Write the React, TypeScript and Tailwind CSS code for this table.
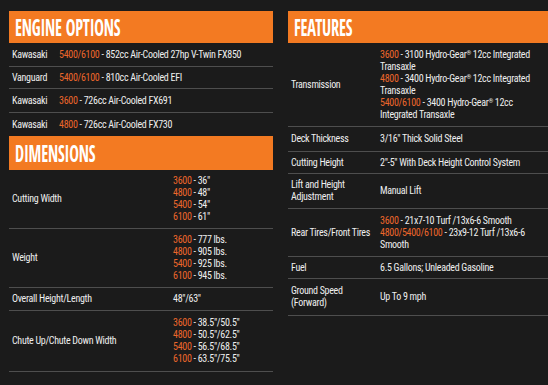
import React from "react";

const O = ({ children }: { children: React.ReactNode }) => (
  <span className="text-[#ec672b]">{children}</span>
);

const Header = ({ title, h }: { title: string; h: string }) => (
  <div className={`${h} bg-[#f37a22] flex items-center pl-[6px] overflow-hidden`}>
    <span className="inline-block origin-left scale-x-[0.68] text-white font-bold text-[24px] leading-none whitespace-nowrap font-['Open_Sans_Condensed','Roboto_Condensed',sans-serif]">
      {title}
    </span>
  </div>
);

const line = "border-b border-[#4e4e4e]";

export default function App() {
  return (
    <div className="w-[548px] h-[385px] overflow-hidden bg-[#1b1b1b] flex pt-[11px] text-[#eeeeee] text-[10px] leading-[12px] tracking-[-0.3px] font-['Roboto_Condensed','Liberation_Sans',sans-serif]">
      {/* Left column */}
      <div className="ml-[9px] w-[264px] flex flex-col shrink-0">
        <Header title="ENGINE OPTIONS" h="h-[32px]" />
        <div className="flex flex-col">
          <div className={`h-[24px] flex items-center ${line} whitespace-nowrap`}>
            <div className="w-[50px] pl-[3px]">Kawasaki</div>
            <div><O>5400/6100</O> - 852cc Air-Cooled 27hp V-Twin FX850</div>
          </div>
          <div className={`h-[22px] flex items-center ${line} whitespace-nowrap`}>
            <div className="w-[50px] pl-[3px]">Vanguard</div>
            <div><O>5400/6100</O> - 810cc Air-Cooled EFI</div>
          </div>
          <div className={`h-[24px] flex items-center ${line} whitespace-nowrap`}>
            <div className="w-[50px] pl-[3px]">Kawasaki</div>
            <div><O>3600</O> - 726cc Air-Cooled FX691</div>
          </div>
          <div className="h-[23px] flex items-center whitespace-nowrap">
            <div className="w-[50px] pl-[3px]">Kawasaki</div>
            <div><O>4800</O> - 726cc Air-Cooled FX730</div>
          </div>
        </div>
        <Header title="DIMENSIONS" h="h-[34px]" />
        <div className="flex flex-col">
          <div className={`h-[59px] flex items-center ${line} whitespace-nowrap`}>
            <div className="w-[164px] pl-[3px]">Cutting Width</div>
            <div>
              <div><O>3600</O> - 36"</div>
              <div><O>4800</O> - 48"</div>
              <div><O>5400</O> - 54"</div>
              <div><O>6100</O> - 61"</div>
            </div>
          </div>
          <div className={`h-[59px] flex items-center ${line} whitespace-nowrap`}>
            <div className="w-[164px] pl-[3px]">Weight</div>
            <div>
              <div><O>3600</O> - 777 lbs.</div>
              <div><O>4800</O> - 905 lbs.</div>
              <div><O>5400</O> - 925 lbs.</div>
              <div><O>6100</O> - 945 lbs.</div>
            </div>
          </div>
          <div className={`h-[23px] flex items-center ${line} whitespace-nowrap`}>
            <div className="w-[164px] pl-[3px]">Overall Height/Length</div>
            <div>48"/63"</div>
          </div>
          <div className={`h-[61px] flex items-center ${line} whitespace-nowrap`}>
            <div className="w-[164px] pl-[3px]">Chute Up/Chute Down Width</div>
            <div>
              <div><O>3600</O> - 38.5"/50.5"</div>
              <div><O>4800</O> - 50.5"/62.5"</div>
              <div><O>5400</O> - 56.5"/68.5"</div>
              <div><O>6100</O> - 63.5"/75.5"</div>
            </div>
          </div>
        </div>
      </div>

      {/* Right column */}
      <div className="ml-[15px] w-[260px] flex flex-col shrink-0">
        <Header title="FEATURES" h="h-[32px]" />
        <div className="flex flex-col">
          <div className={`h-[84px] flex items-center ${line}`}>
            <div className="w-[92px] pl-[3px]">Transmission</div>
            <div className="whitespace-nowrap">
              <div><O>3600</O> - 3100 Hydro-Gear<sup className="text-[6px]">®</sup> 12cc Integrated</div>
              <div>Transaxle</div>
              <div><O>4800</O> - 3400 Hydro-Gear<sup className="text-[6px]">®</sup> 12cc Integrated</div>
              <div>Transaxle</div>
              <div><O>5400/6100</O> - 3400 Hydro-Gear<sup className="text-[6px]">®</sup> 12cc</div>
              <div>Integrated Transaxle</div>
            </div>
          </div>
          <div className={`h-[25px] flex items-center ${line} whitespace-nowrap`}>
            <div className="w-[92px] pl-[3px]">Deck Thickness</div>
            <div>3/16" Thick Solid Steel</div>
          </div>
          <div className={`h-[22px] flex items-center ${line} whitespace-nowrap`}>
            <div className="w-[92px] pl-[3px]">Cutting Height</div>
            <div>2"-5" With Deck Height Control System</div>
          </div>
          <div className={`h-[35px] flex items-center ${line} whitespace-nowrap`}>
            <div className="w-[92px] pl-[3px]">
              <div>Lift and Height</div>
              <div>Adjustment</div>
            </div>
            <div>Manual Lift</div>
          </div>
          <div className={`h-[48px] flex items-center ${line} whitespace-nowrap`}>
            <div className="w-[92px] pl-[3px]">Rear Tires/Front Tires</div>
            <div>
              <div><O>3600</O> - 21x7-10 Turf /13x6-6 Smooth</div>
              <div><O>4800/5400/6100</O> - 23x9-12 Turf /13x6-6</div>
              <div>Smooth</div>
            </div>
          </div>
          <div className={`h-[22px] flex items-center ${line} whitespace-nowrap`}>
            <div className="w-[92px] pl-[3px]">Fuel</div>
            <div>6.5 Gallons; Unleaded Gasoline</div>
          </div>
          <div className={`h-[37px] flex items-center ${line} whitespace-nowrap`}>
            <div className="w-[92px] pl-[3px]">
              <div>Ground Speed</div>
              <div>(Forward)</div>
            </div>
            <div>Up To 9 mph</div>
          </div>
        </div>
      </div>
    </div>
  );
}
